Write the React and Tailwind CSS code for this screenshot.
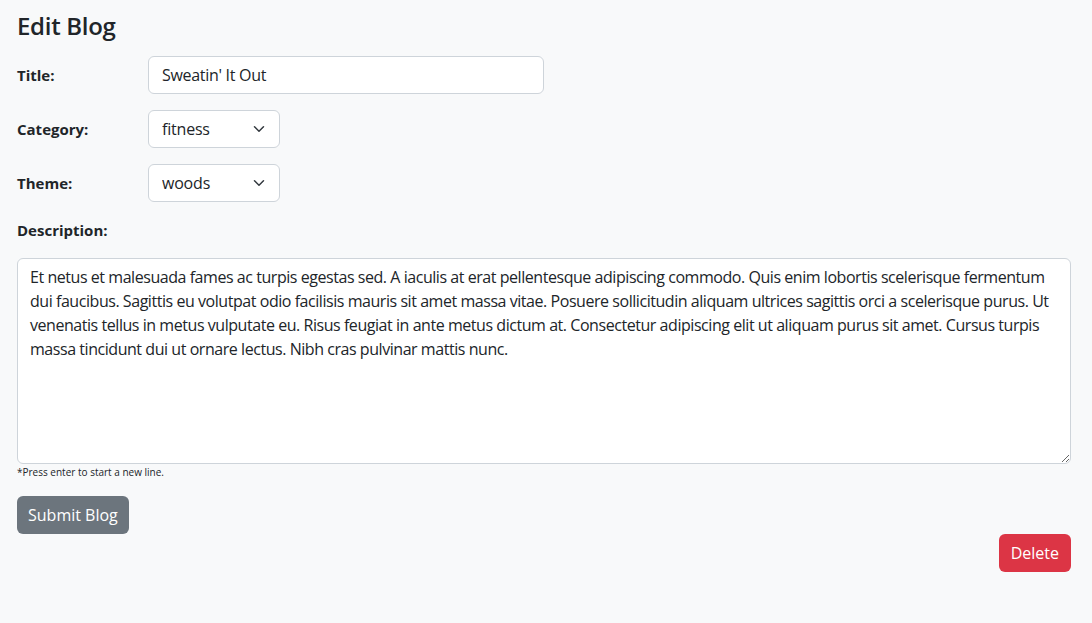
const lines = [
  "Et netus et malesuada fames ac turpis egestas sed. A iaculis at erat pellentesque adipiscing commodo. Quis enim lobortis scelerisque fermentum",
  "dui faucibus. Sagittis eu volutpat odio facilisis mauris sit amet massa vitae. Posuere sollicitudin aliquam ultrices sagittis orci a scelerisque purus. Ut",
  "venenatis tellus in metus vulputate eu. Risus feugiat in ante metus dictum at. Consectetur adipiscing elit ut aliquam purus sit amet. Cursus turpis",
  "massa tincidunt dui ut ornare lectus. Nibh cras pulvinar mattis nunc.",
];

function Chevron() {
  return (
    <svg
      className="pointer-events-none absolute right-[15px] top-1/2 -translate-y-1/2"
      width="12"
      height="9"
      viewBox="0 0 16 12"
      fill="none"
    >
      <path d="m2 3 6 6 6-6" stroke="#343a40" strokeWidth="2" strokeLinecap="round" strokeLinejoin="round" />
    </svg>
  );
}

function SelectBox({ value, options }) {
  return (
    <div className="relative w-[132px]">
      <select
        defaultValue={value}
        className="h-[38px] w-full appearance-none rounded-[6px] border border-[#ced4da] bg-white pl-[13px] pr-9 text-[16px] tracking-[-0.2px] text-[#212529] outline-none"
      >
        {options.map((o) => (
          <option key={o}>{o}</option>
        ))}
      </select>
      <Chevron />
    </div>
  );
}

export default function App() {
  return (
    <div
      className="min-h-[623px] bg-[#f8f9fa] pl-[17px] pr-[21px] pt-[11px] text-[#212529]"
      style={{ fontFamily: '"Open Sans", "Noto Sans", sans-serif' }}
    >
      <h4 className="mb-[16px] text-[24px] font-semibold leading-[29px] tracking-[-0.3px]">Edit Blog</h4>

      <div className="flex flex-col gap-4">
        <div className="flex items-center">
          <label className="w-[131px] text-[15px] font-bold">Title:</label>
          <input
            defaultValue="Sweatin' It Out"
            className="h-[38px] w-[396px] rounded-[6px] border border-[#ced4da] bg-white px-[13px] text-[16px] tracking-[-0.3px] outline-none"
          />
        </div>
        <div className="flex items-center">
          <label className="w-[131px] text-[15px] font-bold">Category:</label>
          <SelectBox value="fitness" options={["fitness", "food", "travel"]} />
        </div>
        <div className="flex items-center">
          <label className="w-[131px] text-[15px] font-bold">Theme:</label>
          <SelectBox value="woods" options={["woods", "ocean", "city"]} />
        </div>
      </div>

      <label className="mt-[16px] block text-[15px] font-bold leading-[24px]">Description:</label>
      <textarea
        defaultValue={lines.join("\n")}
        wrap="off"
        className="mt-[16px] block h-[206px] w-full overflow-hidden rounded-[6px] border border-[#ced4da] bg-white px-[12px] py-[6px] text-[16px] leading-[24px] tracking-[-0.45px] outline-none"
      />
      <p className="mt-[1px] text-[10px] leading-[14px]">*Press enter to start a new line.</p>

      <button className="mt-[17px] h-[38px] rounded-[6px] bg-[#6c757d] px-[11px] text-[16px] text-white">
        Submit Blog
      </button>

      <div className="flex justify-end">
        <button className="h-[38px] rounded-[6px] bg-[#dc3545] px-[12px] text-[16px] text-white">
          Delete
        </button>
      </div>
    </div>
  );
}
